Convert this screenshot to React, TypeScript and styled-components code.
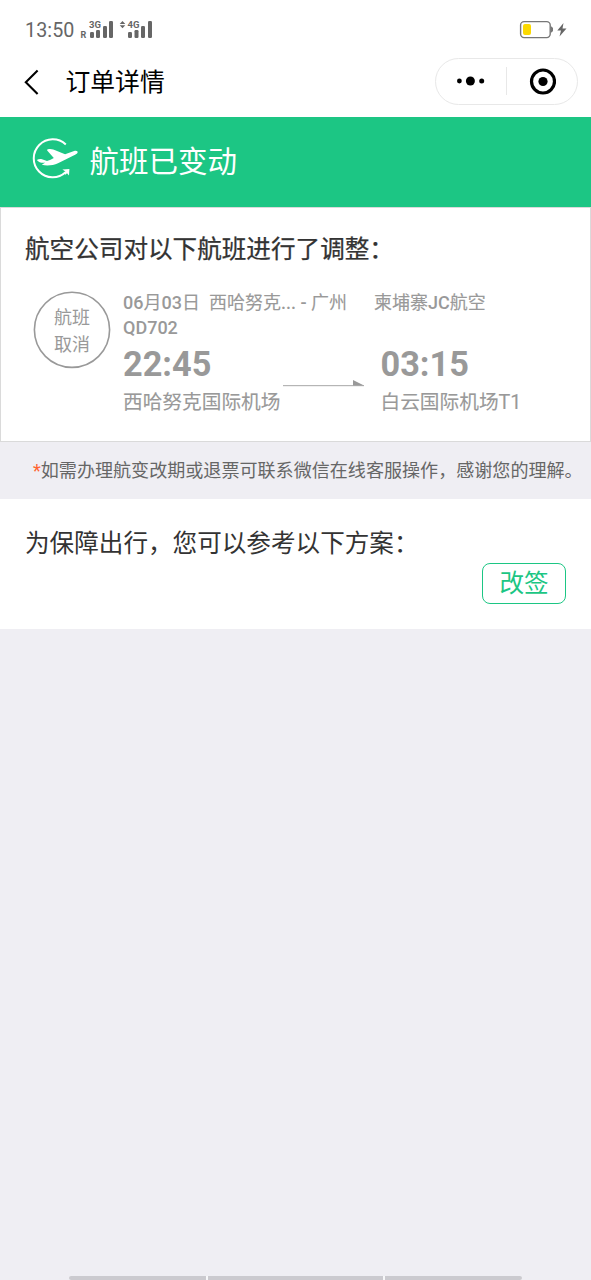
import React from "react";
import styled, { createGlobalStyle } from "styled-components";

const GlobalStyle = createGlobalStyle`
  * { box-sizing: border-box; }
  body {
    margin: 0;
    background: #efeef3;
    font-family: Roboto, "Noto Sans CJK SC", sans-serif;
  }
`;

const Screen = styled.div`
  display: flex;
  flex-direction: column;
  width: 591px;
  height: 1280px;
  overflow: hidden;
  background: #efeef3;
`;

const StatusBar = styled.div`
  display: flex;
  align-items: center;
  height: 60px;
  padding: 0 24px 0 25px;
  background: #fff;
`;

const Clock = styled.span`
  margin-top: 2px;
  font-size: 19.7px;
  line-height: 24px;
  letter-spacing: 0.1px;
  color: #666;
`;

const SignalIcon = styled.svg`
  display: block;
  margin-left: 5px;
  text {
    font-family: Roboto, sans-serif;
    font-weight: 700;
    fill: #666;
  }
`;

const BatteryIcon = styled.svg`
  display: block;
  margin-left: auto;
`;

const NavBar = styled.div`
  display: flex;
  align-items: center;
  height: 56.5px;
  padding: 0 13px 13.5px 24px;
  background: #fff;
`;

const BackIcon = styled.svg`
  display: block;
`;

const NavTitle = styled.h1`
  margin: 2px auto 0 25.5px;
  font-size: 24.8px;
  font-weight: 400;
  line-height: 32px;
  color: #000;
`;

const Capsule = styled.div`
  display: flex;
  align-items: center;
  width: 143px;
  height: 47px;
  flex: none;
  margin-top: -1px;
  border: 1px solid #e8e8e8;
  border-radius: 24px;
`;

const CapsuleButton = styled.div`
  display: flex;
  flex: 1;
  align-items: center;
  justify-content: center;
  height: 28px;
  & + & {
    border-left: 1px solid #e8e8e8;
  }
`;

const Banner = styled.div`
  display: flex;
  align-items: center;
  height: 90.5px;
  padding: 0 32px 4px;
  background: #1cc684;
  color: #fff;
`;

const BannerIcon = styled.svg`
  display: block;
  margin-top: -4px;
`;

const BannerTitle = styled.h2`
  margin: 5px 0 0 9.5px;
  font-size: 29.5px;
  font-weight: 400;
  line-height: 40px;
`;

const FlightCard = styled.section`
  height: 235px;
  padding: 24px 24px 0;
  border: 1px solid #dadada;
  background: #fff;
`;

const Heading = styled.h3<{ $stroke?: number }>`
  margin: 0;
  font-size: 24.6px;
  font-weight: 400;
  line-height: 36px;
  white-space: nowrap;
  color: #333;
  -webkit-text-stroke: ${(p) => p.$stroke ?? 0}px currentColor;
`;

const Flight = styled.div`
  display: flex;
  margin-top: 23px;
  color: #999;
`;

const CancelStamp = styled.div`
  width: 78px;
  height: 78px;
  margin: 0 12px 0 8px;
  flex: none;
  position: relative;
  padding-top: 14px;
  font-size: 18px;
  line-height: 26.5px;
  text-align: center;
`;

const StampRing = styled.svg`
  position: absolute;
  inset: 0;
`;

const FlightInfo = styled.div`
  display: flex;
  flex-direction: column;
  margin-top: -1px;
`;

const Summary = styled.div`
  display: flex;
  font-size: 18px;
  line-height: 25px;
  white-space: nowrap;
  -webkit-text-stroke: 0.12px currentColor;
`;

const Latin = styled.span`
  font-weight: 500;
  -webkit-text-stroke: 0;
`;

const Route = styled.span`
  margin: 0 27px 0 9px;
`;

const Legs = styled.div`
  display: flex;
`;

const Stop = styled.div`
  white-space: nowrap;
`;

const Time = styled.div`
  margin-top: 4px;
  font-size: 34.3px;
  font-weight: 700;
  line-height: 40px;
`;

const Airport = styled.div`
  margin-top: 4.5px;
  font-size: 19.7px;
  line-height: 28px;
  -webkit-text-stroke: 0.12px currentColor;
`;

const RouteArrow = styled.svg`
  display: block;
  flex: none;
  margin: 40px 17px 0 2px;
`;

const Notice = styled.p`
  height: 57px;
  margin: 0;
  padding: 0 0 0 33px;
  font-size: 18.07px;
  line-height: 57px;
  white-space: nowrap;
  color: #666;
`;

const Star = styled.span`
  color: #ff6430;
`;

const Options = styled.section`
  display: flex;
  flex-direction: column;
  height: 130px;
  padding: 27px 25px 0;
  background: #fff;
`;

const RebookButton = styled.button`
  align-self: flex-end;
  width: 84px;
  height: 41px;
  margin-top: 1px;
  padding: 0;
  border: 1px solid #1cc684;
  border-radius: 8px;
  background: #fff;
  font-family: inherit;
  font-size: 24.6px;
  line-height: 38px;
  color: #1cc684;
`;

const GestureBar = styled.div`
  display: grid;
  grid-template-columns: 137px 175px 137px;
  gap: 2px;
  width: 453px;
  height: 4px;
  margin: auto 0 0 69px;
  border-radius: 2px;
  overflow: hidden;
  background: #f7f7f9;
`;

const GestureSegment = styled.span`
  background: #cbcacf;
`;

export default function App() {
  return (
    <Screen>
      <GlobalStyle />
      <StatusBar>
        <Clock>13:50</Clock>
        <SignalIcon width="74" height="20" viewBox="80 20 74 20">
          <text x="80.5" y="38" fontSize="9">R</text>
          <text x="89" y="28" fontSize="9.5">3G</text>
          <text x="127.5" y="28" fontSize="9.5">4G</text>
          <g fill="#666">
            <rect x="90" y="32" width="4" height="6" rx="1.2" />
            <rect x="96" y="30" width="4" height="8" rx="1.2" />
            <rect x="103" y="26" width="4" height="12" rx="1.2" />
            <rect x="109" y="21" width="4" height="17" rx="1.2" />
            <rect x="128" y="32" width="4" height="6" rx="1.2" />
            <rect x="134.5" y="30" width="4" height="8" rx="1.2" />
            <rect x="141" y="26" width="4" height="12" rx="1.2" />
            <rect x="148" y="21" width="4" height="17" rx="1.2" />
            <path d="M119.7 24l2.8-3 2.8 3zM119.7 25.3h5.6l-2.8 3z" />
          </g>
        </SignalIcon>
        <BatteryIcon width="48" height="20" viewBox="519 20 48 20">
          <rect x="520.6" y="21.6" width="29.6" height="16" rx="3.5" fill="none" stroke="#777" strokeWidth="1.4" />
          <path d="M550.5 26.5h1l1.5 1.5v3l-1.5 1.5h-1z" fill="#777" />
          <rect x="523" y="24" width="8" height="11" rx="2" fill="#fbd900" />
          <path d="M563.5 23l-6.2 7.5h3.7L559.5 36.5l7-8h-4z" fill="#666" />
        </BatteryIcon>
      </StatusBar>
      <NavBar>
        <BackIcon width="16" height="26" viewBox="24 68 16 26" fill="none" stroke="#000" strokeWidth="2.1">
          <path d="M37.6 69.4L25.8 81.2 37.6 93" />
        </BackIcon>
        <NavTitle>订单详情</NavTitle>
        <Capsule>
          <CapsuleButton>
            <svg width="28" height="10" viewBox="0.6 0 28 10">
              <circle cx="3" cy="5" r="2.4" />
              <circle cx="14" cy="5" r="4.5" />
              <circle cx="25.3" cy="5" r="2.5" />
            </svg>
          </CapsuleButton>
          <CapsuleButton>
            <svg width="27" height="27" viewBox="-0.5 0 27 27">
              <circle cx="13.5" cy="13.5" r="11.5" fill="none" stroke="#000" strokeWidth="3.2" />
              <circle cx="13.5" cy="13.5" r="4.6" />
            </svg>
          </CapsuleButton>
        </Capsule>
      </NavBar>
      <Banner>
        <BannerIcon width="48" height="42" viewBox="32 137 48 42">
          <path
            d="M65.8 144.5A19 19 0 1 0 65.6 172.3"
            fill="none"
            stroke="#fff"
            strokeWidth="2"
          />
          <path d="M62.4 169.6l7-.7-.4 6.6-2-2.2-1.6 1.5-1.4-1.7 1.4-1.6z" fill="#fff" />
          <path
            d="M36.8 159.9c1.6-.8 3.5-1 5.2-.7l5 1.7c2.5-.7 4.8-1.7 6.8-2.9l-6.4-7.2c-.6-.8-.3-1.5.6-1.6 1.8-.3 3.6-.3 5.3.4l11.8 4.7 9-3.4c2.3-.7 4 .1 3.5 1.7-.3 1-1.3 1.7-2.5 2.2L58 163.3c-5 2.2-11.2 2.9-16.2 1.5l3.6-2.2c-3.5.8-6.5-.3-8.6-2.7z"
            fill="#fff"
          />
        </BannerIcon>
        <BannerTitle>航班已变动</BannerTitle>
      </Banner>
      <FlightCard>
        <Heading $stroke={0.25}>航空公司对以下航班进行了调整：</Heading>
        <Flight>
          <CancelStamp>
            <StampRing width="78" height="78" viewBox="0 0 78 78">
              <circle cx="39" cy="38.8" r="37.6" fill="none" stroke="#999" strokeWidth="1.6" />
            </StampRing>
            航班
            <br />
            取消
          </CancelStamp>
          <FlightInfo>
            <Summary>
              <span>
                <Latin>06</Latin>月<Latin>03</Latin>日
              </span>
              <Route>
                西哈努克<Latin>... - </Latin>广州
              </Route>
              <span>
                柬埔寨<Latin>JC</Latin>航空
              </span>
            </Summary>
            <Summary>
              <Latin>QD702</Latin>
            </Summary>
            <Legs>
              <Stop>
                <Time>22:45</Time>
                <Airport>西哈努克国际机场</Airport>
              </Stop>
              <RouteArrow width="81" height="8" viewBox="0 0 81 8">
                <rect x="0" y="5" width="81" height="1.2" fill="#b5b5b5" />
                <path d="M70 0l11 5.5H70z" fill="#999" />
              </RouteArrow>
              <Stop>
                <Time>03:15</Time>
                <Airport>白云国际机场T1</Airport>
              </Stop>
            </Legs>
          </FlightInfo>
        </Flight>
      </FlightCard>
      <Notice>
        <Star>*</Star>如需办理航变改期或退票可联系微信在线客服操作，感谢您的理解。
      </Notice>
      <Options>
        <Heading>为保障出行，您可以参考以下方案：</Heading>
        <RebookButton>改签</RebookButton>
      </Options>
      <GestureBar>
        <GestureSegment />
        <GestureSegment />
        <GestureSegment />
      </GestureBar>
    </Screen>
  );
}
